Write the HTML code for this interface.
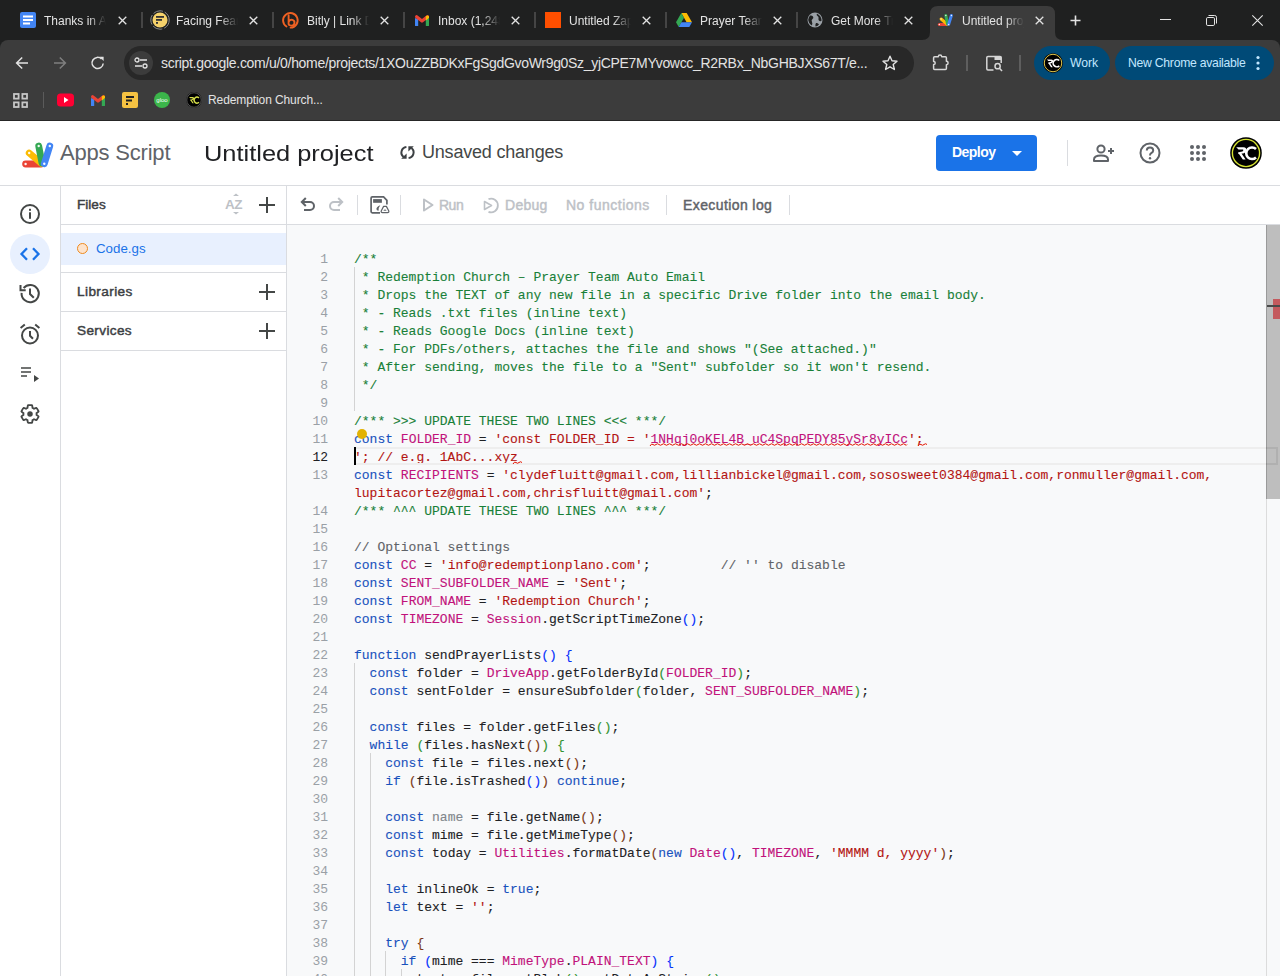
<!DOCTYPE html>
<html><head><meta charset="utf-8">
<style>
*{box-sizing:border-box;margin:0;padding:0}
html,body{width:1280px;height:976px;overflow:hidden;background:#fff;font-family:"Liberation Sans",sans-serif}
.a{position:absolute}
svg{position:absolute;overflow:visible}
#frame{position:absolute;left:0;top:0;width:1280px;height:48px;background:#1f2020}
#toolbar{position:absolute;left:0;top:40px;width:1280px;height:80px;background:#3c3c3c;border-radius:8px 8px 0 0}
#tbline{position:absolute;left:0;top:120px;width:1280px;height:1px;background:#262626}
.ttl{position:absolute;top:14px;white-space:nowrap;overflow:hidden;height:17px;color:#e3e3e3;font-size:12px;line-height:15px;
 -webkit-mask-image:linear-gradient(to right,#000 calc(100% - 18px),transparent 100%)}
.sep{position:absolute;top:12px;width:2px;height:16px;background:#454545}
.bsep{position:absolute;width:1px;background:#6b6b6b}
/* app */
.hdr-line{position:absolute;left:0;top:185px;width:1280px;height:1px;background:#dadce0}
.rail-line{position:absolute;left:60px;top:186px;width:1px;height:790px;background:#dadce0}
.files-line{position:absolute;left:286px;top:186px;width:1px;height:790px;background:#dadce0}
.med{font-weight:normal;-webkit-text-stroke:0.45px currentColor}
.hl{position:absolute;height:1px;background:#dadce0}
.gs{font-family:"Liberation Sans",sans-serif}
#code{position:absolute;left:287px;top:225px;width:979px;height:751px;background:#f8f9fa;overflow:hidden}
.ln{position:absolute;left:290px;padding-top:2px;width:38px;text-align:right;font:13px/18px "Liberation Mono",monospace;color:#9aa0a6}
.ln.cur{color:#202124}
.cl{position:absolute;left:354px;padding-top:2px;-webkit-text-stroke:0.1px currentColor;white-space:pre;font:13px/18px "Liberation Mono",monospace;color:#202124}
.k{color:#1851bd}.c{color:#c1127a}.s{color:#b31412}.g{color:#188038}.m{color:#5f6368}.t{color:#202124}
.b1{color:#0431fa}.b2{color:#319331}.b3{color:#7b3814}.n{color:#80868b}
.ig{position:absolute;width:1px;background:#d3d3d3}
</style></head><body>
<!-- ========== CHROME FRAME ========== -->
<div id="frame"></div>
<div id="toolbar"></div>
<div id="tbline"></div>
<!-- active tab -->
<svg width="1280" height="41" style="left:0;top:0">
 <path d="M922 40 Q930 40 930 32 L930 14 Q930 6 938 6 L1047 6 Q1055 6 1055 14 L1055 32 Q1055 40 1063 40 Z" fill="#3c3c3c"/>
</svg>
<!-- tab 1 docs -->
<svg width="16" height="16" style="left:20px;top:12px" viewBox="0 0 16 16"><rect x="0" y="0" width="16" height="16" rx="2" fill="#4285f4"/><rect x="3" y="3.5" width="10" height="2" fill="#fff"/><rect x="3" y="7" width="10" height="2" fill="#fff"/><rect x="3" y="10.5" width="7" height="2" fill="#fff"/></svg>
<div class="ttl" style="left:44px;width:62px">Thanks in Advance</div>
<svg width="9" height="9" style="left:118px;top:16px" viewBox="0 0 9 9"><path d="M0.7 0.7L8.3 8.3M8.3 0.7L0.7 8.3" stroke="#e3e3e3" stroke-width="1.3"/></svg>
<div class="sep" style="left:141px"></div>
<!-- tab 2 facing fear -->
<svg width="20" height="20" style="left:150px;top:10px" viewBox="0 0 20 20"><circle cx="10" cy="10" r="9.2" fill="none" stroke="#8a8a8a" stroke-width="1" stroke-dasharray="10 2"/><circle cx="10" cy="10" r="7.5" fill="#f6d26b"/><rect x="6" y="6" width="8" height="1.8" fill="#333"/><rect x="6" y="9" width="6" height="1.8" fill="#333"/><rect x="6" y="12" width="2" height="1.8" fill="#333"/></svg>
<div class="ttl" style="left:176px;width:62px">Facing Fear</div>
<svg width="9" height="9" style="left:249px;top:16px" viewBox="0 0 9 9"><path d="M0.7 0.7L8.3 8.3M8.3 0.7L0.7 8.3" stroke="#e3e3e3" stroke-width="1.3"/></svg>
<div class="sep" style="left:272px"></div>
<!-- tab 3 bitly -->
<svg width="18" height="18" style="left:282px;top:11px" viewBox="0 0 18 18"><path d="M4.5 15.5 A7.3 7.3 0 1 1 8.6 16.6" fill="none" stroke="#ee6123" stroke-width="1.9" stroke-linecap="round"/><path d="M6.6 4.2 V12.8 Q6.6 14.6 9.6 14.6 A2.9 2.9 0 1 0 7 10.4" fill="none" stroke="#ee6123" stroke-width="1.9" stroke-linecap="round"/></svg>
<div class="ttl" style="left:307px;width:62px">Bitly | Link Dashboard</div>
<svg width="9" height="9" style="left:380px;top:16px" viewBox="0 0 9 9"><path d="M0.7 0.7L8.3 8.3M8.3 0.7L0.7 8.3" stroke="#e3e3e3" stroke-width="1.3"/></svg>
<div class="sep" style="left:403px"></div>
<!-- tab 4 gmail -->
<svg width="14" height="11" style="left:415px;top:14.5px" viewBox="0 0 14 11"><path d="M0 3 V10.5 Q0 11 0.5 11 H3.2 V4.2 Z" fill="#4285f4"/><path d="M14 3 V10.5 Q14 11 13.5 11 H10.8 V4.2 Z" fill="#34a853"/><path d="M1.6 1.8 L7 6 L12.4 1.8" fill="none" stroke="#ea4335" stroke-width="3.2" stroke-linecap="round" stroke-linejoin="round"/><path d="M10.8 1.2 Q12.4 -0.2 13.6 0.8 Q14.2 1.4 14 3 L10.8 5.4 Z" fill="#fbbc04"/></svg>
<div class="ttl" style="left:438px;width:62px">Inbox (1,248) - clyde</div>
<svg width="9" height="9" style="left:511px;top:16px" viewBox="0 0 9 9"><path d="M0.7 0.7L8.3 8.3M8.3 0.7L0.7 8.3" stroke="#e3e3e3" stroke-width="1.3"/></svg>
<div class="sep" style="left:534px"></div>
<!-- tab 5 zapier -->
<div class="a" style="left:545px;top:12px;width:16px;height:16px;background:#ff4f00"></div>
<div class="ttl" style="left:569px;width:62px">Untitled Zap</div>
<svg width="9" height="9" style="left:642px;top:16px" viewBox="0 0 9 9"><path d="M0.7 0.7L8.3 8.3M8.3 0.7L0.7 8.3" stroke="#e3e3e3" stroke-width="1.3"/></svg>
<div class="sep" style="left:665px"></div>
<!-- tab 6 drive -->
<svg width="16" height="14" style="left:676px;top:13px" viewBox="0 0 16 14"><path d="M5.3 0 H10.7 L16 9.3 H10.6 Z" fill="#fbbc04"/><path d="M5.3 0 L0 9.3 L2.7 14 L8 4.7 Z" fill="#34a853"/><path d="M2.7 14 H13.3 L16 9.3 H5.4 Z" fill="#4285f4"/></svg>
<div class="ttl" style="left:700px;width:62px">Prayer Team</div>
<svg width="9" height="9" style="left:773px;top:16px" viewBox="0 0 9 9"><path d="M0.7 0.7L8.3 8.3M8.3 0.7L0.7 8.3" stroke="#e3e3e3" stroke-width="1.3"/></svg>
<div class="sep" style="left:796px"></div>
<!-- tab 7 globe -->
<svg width="16" height="16" style="left:807px;top:12px" viewBox="0 0 16 16"><circle cx="8" cy="8" r="7.5" fill="#9aa0a6"/><path d="M3 3.5 Q5 3 6 4.5 Q7 6 5.5 7 Q4 8 5 10 Q6 12 4.5 13.5 Q1.5 11 1.2 8 Q1.5 5 3 3.5Z M10 1.5 Q9 3 10.5 4 Q12 4.5 11.5 6.5 Q11 8 12.5 9 Q14 9.5 14.6 8.5 Q14.5 4 10 1.5Z M9 11 Q11 10.5 12 12.5 Q10.5 14.3 8.5 14.5 Q8 12.5 9 11Z" fill="#1f2020"/></svg>
<div class="ttl" style="left:831px;width:62px">Get More Traffic</div>
<svg width="9" height="9" style="left:904px;top:16px" viewBox="0 0 9 9"><path d="M0.7 0.7L8.3 8.3M8.3 0.7L0.7 8.3" stroke="#e3e3e3" stroke-width="1.3"/></svg>
<!-- tab 8 active apps script -->
<svg width="17" height="14" style="left:937px;top:13px" viewBox="0 0 34 28"><g stroke-linecap="round" stroke-width="6"><path d="M4.6 23 H20" stroke="#ea4335"/><path d="M8.2 12 L20.5 22.5" stroke="#fbbc04"/><path d="M17.7 5 L21 22" stroke="#34a853"/><path d="M28.8 5 L23.3 22.8" stroke="#4285f4"/></g><g fill="#fff" opacity="0.95"><circle cx="4.6" cy="23" r="1.3"/><circle cx="17.7" cy="5" r="1.3"/><circle cx="28.8" cy="5" r="1.3"/><circle cx="23.3" cy="22.8" r="1.3"/><circle cx="8.2" cy="12" r="1.3"/></g></svg>
<div class="ttl" style="left:962px;width:62px">Untitled project</div>
<svg width="9" height="9" style="left:1035px;top:16px" viewBox="0 0 9 9"><path d="M0.7 0.7L8.3 8.3M8.3 0.7L0.7 8.3" stroke="#e3e3e3" stroke-width="1.3"/></svg>
<!-- new tab -->
<svg width="11" height="11" style="left:1070px;top:14.5px" viewBox="0 0 11 11"><path d="M5.5 0.5V10.5M0.5 5.5H10.5" stroke="#e3e3e3" stroke-width="1.6"/></svg>
<!-- window controls -->
<div class="a" style="left:1160px;top:19px;width:11px;height:1px;background:#e3e3e3"></div>
<svg width="11" height="11" style="left:1205.5px;top:14.5px" viewBox="0 0 11 11"><rect x="0.5" y="2.5" width="8" height="8" rx="1.3" fill="none" stroke="#e3e3e3" stroke-width="1"/><path d="M2.5 0.5 H8.7 Q10.5 0.5 10.5 2.3 V8.5" fill="none" stroke="#e3e3e3" stroke-width="1"/></svg>
<svg width="11" height="11" style="left:1251.5px;top:14.5px" viewBox="0 0 11 11"><path d="M0.3 0.3L10.7 10.7M10.7 0.3L0.3 10.7" stroke="#e3e3e3" stroke-width="1.1"/></svg>

<!-- ===== toolbar ===== -->
<svg width="14" height="14" style="left:15px;top:56px" viewBox="0 0 14 14"><path d="M13 7H1.8M7.2 1.5L1.6 7L7.2 12.5" fill="none" stroke="#e3e3e3" stroke-width="1.5"/></svg>
<svg width="14" height="14" style="left:53px;top:56px" viewBox="0 0 14 14"><path d="M1 7H12.2M6.8 1.5L12.4 7L6.8 12.5" fill="none" stroke="#7f7f7f" stroke-width="1.5"/></svg>
<svg width="14" height="14" style="left:91px;top:56px" viewBox="0 0 14 14"><path d="M12.2 7.5 A5.6 5.6 0 1 1 10.6 3" fill="none" stroke="#e3e3e3" stroke-width="1.5"/><path d="M8.5 0.8 H12.6 V4.9 Z" fill="#e3e3e3"/></svg>
<div class="a" style="left:124px;top:46px;width:790px;height:34px;border-radius:17px;background:#282828"></div>
<div class="a" style="left:129px;top:51px;width:24px;height:24px;border-radius:12px;background:#3c3c3c"></div>
<svg width="14" height="12" style="left:134px;top:57px" viewBox="0 0 14 12"><circle cx="3" cy="3" r="2" fill="none" stroke="#e3e3e3" stroke-width="1.3"/><path d="M6 3H13M1 9H8" stroke="#e3e3e3" stroke-width="1.3"/><circle cx="11" cy="9" r="2" fill="none" stroke="#e3e3e3" stroke-width="1.3"/></svg>
<div class="a" style="left:161px;top:55px;font-size:14px;line-height:16px;color:#e3e3e3;white-space:nowrap;letter-spacing:-0.31px">script.google.com/u/0/home/projects/1XOuZZBDKxFgSgdGvoWr9g0Sz_yjCPE7MYvowcc_R2RBx_NbGHBJXS67T/e...</div>
<svg width="16" height="16" style="left:882px;top:55px" viewBox="0 0 16 16"><path d="M8 1.2 L10 5.8 L15 6.2 L11.2 9.5 L12.4 14.5 L8 11.8 L3.6 14.5 L4.8 9.5 L1 6.2 L6 5.8 Z" fill="none" stroke="#e3e3e3" stroke-width="1.4" stroke-linejoin="round"/></svg>
<svg width="18" height="18" style="left:931px;top:53px" viewBox="0 0 18 18"><path d="M3.6 3.8 H7.3 A1.7 1.7 0 0 1 10.7 3.8 H14.4 Q15.4 3.8 15.4 4.8 V8.3 A1.7 1.7 0 0 1 15.4 11.7 V15.6 Q15.4 16.6 14.4 16.6 H3.6 Q2.6 16.6 2.6 15.6 V11.6 A1.6 1.6 0 0 0 2.6 8.4 V4.8 Q2.6 3.8 3.6 3.8 Z" fill="none" stroke="#d7d7d7" stroke-width="1.5" stroke-linejoin="round"/></svg>
<div class="bsep" style="left:966px;top:55px;width:2px;height:16px;background:#5e5e5e"></div>
<svg width="18" height="18" style="left:985px;top:54px" viewBox="0 0 18 18"><path d="M8.5 16 H3 Q1.8 16 1.8 14.8 V3.6 Q1.8 2.4 3 2.4 H15 Q16.2 2.4 16.2 3.6 V9" fill="none" stroke="#d7d7d7" stroke-width="1.5"/><rect x="9.5" y="2.4" width="6.7" height="3.6" fill="#d7d7d7"/><circle cx="12.6" cy="12.2" r="2.6" fill="none" stroke="#d7d7d7" stroke-width="1.5"/><path d="M14.5 14.2 L17 17" stroke="#d7d7d7" stroke-width="1.5"/></svg>
<div class="bsep" style="left:1019px;top:55px;width:2px;height:16px;background:#5e5e5e"></div>
<div class="a" style="left:1034px;top:46px;width:76px;height:34px;border-radius:17px;background:#004a77"></div>
<svg width="20" height="20" style="left:1043px;top:53px" viewBox="0 0 32 32"><circle cx="16" cy="16" r="15.8" fill="#000"/><circle cx="16" cy="16" r="14" fill="none" stroke="#e0c64a" stroke-width="1.6"/><path d="M6.2 10.2 H13.5 Q17 10.5 16 14 Q15 16.6 11.5 16.6 L15.6 22.6 H12.8 L9.2 17.2 Q8 17.2 8 15.5 Q9.5 14.6 12.4 14.4 Q13.6 14 13.2 12.6 H8.5 Z" fill="#fff"/><path d="M26 12 A5.8 5.8 0 1 0 26 20.5" fill="none" stroke="#fff" stroke-width="2.6"/></svg>

<div class="a" style="left:1070px;top:56px;font-size:12.2px;line-height:14px;color:#c2e7ff">Work</div>
<div class="a" style="left:1115px;top:46px;width:159px;height:34px;border-radius:17px;background:#004a77"></div>
<div class="a" style="left:1128px;top:56px;font-size:12.2px;line-height:14px;color:#c2e7ff;white-space:nowrap;letter-spacing:-0.25px">New Chrome available</div>
<svg width="4" height="16" style="left:1256px;top:55px" viewBox="0 0 4 16"><circle cx="2" cy="2.5" r="1.6" fill="#c2e7ff"/><circle cx="2" cy="8" r="1.6" fill="#c2e7ff"/><circle cx="2" cy="13.5" r="1.6" fill="#c2e7ff"/></svg>

<!-- ===== bookmarks ===== -->
<svg width="15" height="15" style="left:13px;top:93px" viewBox="0 0 15 15"><g fill="none" stroke="#c7c7c7" stroke-width="1.8"><rect x="1" y="1" width="4.6" height="4.6"/><rect x="9.4" y="1" width="4.6" height="4.6"/><rect x="1" y="9.4" width="4.6" height="4.6"/><rect x="9.4" y="9.4" width="4.6" height="4.6"/></g></svg>
<div class="bsep" style="left:43px;top:92px;height:16px;background:#5b5b5b"></div>
<svg width="18" height="14" style="left:57px;top:93px" viewBox="0 0 18 14"><rect x="0" y="0.5" width="17" height="13" rx="3.5" fill="#ff0033"/><path d="M7 4 L11.5 7 L7 10 Z" fill="#fff"/></svg>
<svg width="14" height="11" style="left:91px;top:94.5px" viewBox="0 0 14 11"><path d="M0 3 V10.5 Q0 11 0.5 11 H3.2 V4.2 Z" fill="#4285f4"/><path d="M14 3 V10.5 Q14 11 13.5 11 H10.8 V4.2 Z" fill="#34a853"/><path d="M1.6 1.8 L7 6 L12.4 1.8" fill="none" stroke="#ea4335" stroke-width="3.2" stroke-linecap="round" stroke-linejoin="round"/><path d="M10.8 1.2 Q12.4 -0.2 13.6 0.8 Q14.2 1.4 14 3 L10.8 5.4 Z" fill="#fbbc04"/></svg>
<svg width="16" height="16" style="left:122px;top:92px" viewBox="0 0 16 16"><rect width="16" height="16" rx="2" fill="#f5c242"/><rect x="4" y="4" width="8" height="2" fill="#222"/><rect x="4" y="7.5" width="6" height="2" fill="#222"/><rect x="4" y="11" width="2" height="2" fill="#222"/></svg>
<svg width="16" height="16" style="left:154px;top:92px" viewBox="0 0 16 16"><circle cx="8" cy="8" r="8" fill="#3bb54a"/><text x="8" y="10" text-anchor="middle" font-family="Liberation Sans" font-size="6" fill="#fff">gloo</text></svg>
<svg width="16" height="16" style="left:186px;top:92px" viewBox="0 0 32 32"><circle cx="16" cy="16" r="15.8" fill="#000"/><circle cx="16" cy="16" r="14.5" fill="none" stroke="#666" stroke-width="1.6"/><path d="M6.2 10.2 H13.5 Q17 10.5 16 14 Q15 16.6 11.5 16.6 L15.6 22.6 H12.8 L9.2 17.2 Q8 17.2 8 15.5 Q9.5 14.6 12.4 14.4 Q13.6 14 13.2 12.6 H8.5 Z" fill="#d7e04a"/><path d="M26 12 A5.8 5.8 0 1 0 26 20.5" fill="none" stroke="#d7e04a" stroke-width="2.8"/></svg>

<div class="a" style="left:208px;top:93px;font-size:12px;line-height:14px;color:#e3e3e3;white-space:nowrap;letter-spacing:-0.1px">Redemption Church...</div>

<!-- ========== APP ========== -->
<div class="hdr-line"></div>
<div class="rail-line"></div>
<div class="files-line"></div>
<!-- header -->
<svg width="34" height="28" style="left:21px;top:141px" viewBox="0 0 34 28"><g stroke-linecap="round" stroke-width="6.8"><path d="M4.6 23 H20" stroke="#ea4335"/><path d="M8.2 12 L20.5 22.5" stroke="#fbbc04"/><path d="M17.7 5 L21 22" stroke="#34a853"/><path d="M28.8 5 L23.3 22.8" stroke="#4285f4"/></g><g fill="#fff" opacity="0.95"><circle cx="4.6" cy="23" r="1.2"/><circle cx="8.2" cy="12" r="1.2"/><circle cx="17.7" cy="5" r="1.2"/><circle cx="28.8" cy="5" r="1.2"/><circle cx="23.3" cy="22.8" r="1.2"/></g></svg>
<div class="a" style="left:60px;top:140px;font-size:22px;line-height:26px;color:#5f6368;white-space:nowrap;letter-spacing:-0.2px">Apps Script</div>
<div class="a" style="left:204px;top:141px;font-size:22px;line-height:26px;color:#202124;white-space:nowrap;transform:scaleX(1.155);transform-origin:0 0">Untitled project</div>
<svg width="15" height="15" style="left:400px;top:145px" viewBox="0 0 15 15"><path d="M6.4 2 A5.6 5.6 0 0 0 3.6 12" fill="none" stroke="#3c4043" stroke-width="2"/><path d="M8.6 13 A5.6 5.6 0 0 0 11.4 3" fill="none" stroke="#3c4043" stroke-width="2"/><path d="M1.2 13.8 H6.6 V8.4 Z" fill="#3c4043"/><path d="M13.8 1.2 H8.4 V6.6 Z" fill="#3c4043"/></svg>
<div class="a" style="left:422px;top:141px;font-size:18px;line-height:22px;color:#444746;white-space:nowrap;letter-spacing:-0.2px">Unsaved changes</div>
<div class="a" style="left:936px;top:135px;width:101px;height:36px;border-radius:4px;background:#1a73e8"></div>
<div class="a" style="left:952px;top:144px;font-weight:bold;font-size:14px;line-height:16px;color:#fff;letter-spacing:-0.55px">Deploy</div>
<svg width="10" height="5" style="left:1012px;top:151px" viewBox="0 0 10 5"><path d="M0 0H10L5 5Z" fill="#fff"/></svg>
<div class="a" style="left:1067px;top:140px;width:1px;height:26px;background:#dadce0"></div>
<svg width="24" height="24" style="left:1092px;top:141px" viewBox="0 0 24 24"><circle cx="9" cy="8" r="3.6" fill="none" stroke="#5f6368" stroke-width="2"/><path d="M2 20 V18.5 Q2 14.5 9 14.5 Q16 14.5 16 18.5 V20 Z" fill="none" stroke="#5f6368" stroke-width="2" stroke-linejoin="round"/><path d="M19 7 V13 M16 10 H22" stroke="#5f6368" stroke-width="2"/></svg>
<svg width="22" height="22" style="left:1139px;top:142px" viewBox="0 0 22 22"><circle cx="11" cy="11" r="9.5" fill="none" stroke="#5f6368" stroke-width="2"/><path d="M7.8 8.6 Q7.8 5.6 11 5.6 Q14.2 5.6 14.2 8.4 Q14.2 10 12.3 11 Q11 11.8 11 13.4" fill="none" stroke="#5f6368" stroke-width="2"/><circle cx="11" cy="16.3" r="1.2" fill="#5f6368"/></svg>
<svg width="18" height="18" style="left:1189px;top:144px" viewBox="0 0 18 18"><g fill="#5f6368"><circle cx="3" cy="3" r="2"/><circle cx="9" cy="3" r="2"/><circle cx="15" cy="3" r="2"/><circle cx="3" cy="9" r="2"/><circle cx="9" cy="9" r="2"/><circle cx="15" cy="9" r="2"/><circle cx="3" cy="15" r="2"/><circle cx="9" cy="15" r="2"/><circle cx="15" cy="15" r="2"/></g></svg>
<svg width="32" height="32" style="left:1230px;top:136.5px" viewBox="0 0 32 32"><circle cx="16" cy="16" r="15.8" fill="#000"/><circle cx="16" cy="16" r="13.6" fill="none" stroke="#d6e332" stroke-width="1.4"/><path d="M6.2 10.2 H13.5 Q17 10.5 16 14 Q15 16.6 11.5 16.6 L15.6 22.6 H12.8 L9.2 17.2 Q8 17.2 8 15.5 Q9.5 14.6 12.4 14.4 Q13.6 14 13.2 12.6 H8.5 Z" fill="#fff"/><path d="M26 12 A5.8 5.8 0 1 0 26 20.5" fill="none" stroke="#fff" stroke-width="2.6"/></svg>


<!-- left rail -->
<svg width="22" height="22" style="left:19px;top:203px" viewBox="0 0 22 22"><circle cx="11" cy="11" r="9" fill="none" stroke="#444746" stroke-width="2"/><rect x="10" y="5.8" width="2" height="2" fill="#444746"/><rect x="10" y="9.3" width="2" height="6.5" fill="#444746"/></svg>
<div class="a" style="left:10px;top:234px;width:40px;height:40px;border-radius:20px;background:#e8f0fe"></div>
<svg width="22" height="14" style="left:19px;top:247px" viewBox="0 0 22 14"><path d="M8 1.2 L2.5 7 L8 12.8 M14 1.2 L19.5 7 L14 12.8" fill="none" stroke="#1a73e8" stroke-width="2.3"/></svg>
<svg width="22" height="22" style="left:19px;top:283px" viewBox="0 0 22 22"><path d="M2.6 9.8 A8.6 8.6 0 1 0 4.6 5" fill="none" stroke="#444746" stroke-width="2"/><path d="M1.5 2 V7.2 H6.7" fill="none" stroke="#444746" stroke-width="2"/><path d="M11 5.5 V11 L14.8 14.8" fill="none" stroke="#444746" stroke-width="2"/></svg>
<svg width="22" height="22" style="left:19px;top:323px" viewBox="0 0 22 22"><circle cx="11" cy="12.5" r="8" fill="none" stroke="#444746" stroke-width="2"/><path d="M11 8 V12.8 L14 15.8" fill="none" stroke="#444746" stroke-width="2"/><path d="M1.6 5 L5.8 1.5 M20.4 5 L16.2 1.5" stroke="#444746" stroke-width="2"/></svg>
<svg width="22" height="22" style="left:20px;top:366px" viewBox="0 0 22 22"><path d="M1 2 H11 M1 6 H11 M1 10 H7" stroke="#444746" stroke-width="1.7"/><path d="M14 9 L19 12.5 L14 16 Z" fill="#444746"/></svg>
<svg width="22" height="22" style="left:19px;top:403px" viewBox="0 0 24 24"><path d="M19.14 12.94c.04-.3.06-.61.06-.94 0-.32-.02-.64-.07-.94l2.03-1.58c.18-.14.23-.41.12-.61l-1.92-3.32c-.12-.22-.37-.29-.59-.22l-2.39.96c-.5-.38-1.03-.7-1.62-.94l-.36-2.54c-.04-.24-.24-.41-.48-.41h-3.84c-.24 0-.43.17-.47.41l-.36 2.54c-.59.24-1.13.57-1.62.94l-2.39-.96c-.22-.08-.47 0-.59.22L2.74 8.87c-.12.21-.08.47.12.61l2.03 1.58c-.05.3-.09.63-.09.94s.02.64.07.94l-2.03 1.58c-.18.14-.23.41-.12.61l1.92 3.32c.12.22.37.29.59.22l2.39-.96c.5.38 1.03.7 1.62.94l.36 2.54c.05.24.24.41.48.41h3.84c.24 0 .44-.17.47-.41l.36-2.54c.59-.24 1.13-.56 1.62-.94l2.39.96c.22.08.47 0 .59-.22l1.92-3.32c.12-.22.07-.47-.12-.61l-2.01-1.58z" fill="none" stroke="#444746" stroke-width="2"/><circle cx="12" cy="12" r="3" fill="#444746"/></svg>

<!-- files panel -->
<div class="a med" style="left:77px;top:197px;font-size:13.6px;line-height:15px;color:#3c4043">Files</div>
<div class="a" style="left:225px;top:198px;font-weight:bold;font-size:13.5px;line-height:14px;color:#bdc1c6;letter-spacing:-0.5px">AZ</div>
<svg width="8" height="22" style="left:232px;top:193px" viewBox="0 0 8 22"><path d="M1 3 L4 0.5 L7 3 Z M1 19 L4 21.5 L7 19 Z" fill="#bdc1c6"/></svg>
<svg width="18" height="18" style="left:258px;top:196px" viewBox="0 0 18 18"><path d="M9 1 V17 M1 9 H17" stroke="#444746" stroke-width="2"/></svg>
<div class="hl" style="left:61px;top:224px;width:225px"></div>
<div class="a" style="left:61px;top:233px;width:225px;height:32px;background:#e8f0fe"></div>
<div class="a" style="left:77px;top:243px;width:11px;height:11px;border-radius:6px;background:#fde3cc;border:1.3px solid #ee8a1e"></div>
<div class="a" style="left:96px;top:241px;font-size:13.3px;line-height:15px;color:#1a73e8">Code.gs</div>
<div class="hl" style="left:61px;top:272px;width:225px"></div>
<div class="a med" style="left:77px;top:284px;font-size:13.6px;line-height:15px;color:#3c4043;letter-spacing:0.4px">Libraries</div>
<svg width="18" height="18" style="left:258px;top:283px" viewBox="0 0 18 18"><path d="M9 1 V17 M1 9 H17" stroke="#444746" stroke-width="2"/></svg>
<div class="hl" style="left:61px;top:311px;width:225px"></div>
<div class="a med" style="left:77px;top:323px;font-size:13.6px;line-height:15px;color:#3c4043;letter-spacing:0.36px">Services</div>
<svg width="18" height="18" style="left:258px;top:322px" viewBox="0 0 18 18"><path d="M9 1 V17 M1 9 H17" stroke="#444746" stroke-width="2"/></svg>
<div class="hl" style="left:61px;top:350px;width:225px"></div>

<!-- editor toolbar -->
<svg width="16" height="14" style="left:300px;top:197px" viewBox="0 0 16 14"><path d="M2.5 5 H10 A4 4 0 0 1 10 13 H4" fill="none" stroke="#5f6368" stroke-width="2"/><path d="M5.8 1 L1.8 5 L5.8 9" fill="none" stroke="#5f6368" stroke-width="2"/></svg>
<svg width="16" height="14" style="left:328px;top:197px" viewBox="0 0 16 14"><path d="M13.5 5 H6 A4 4 0 0 0 6 13 H12" fill="none" stroke="#bdc1c6" stroke-width="2"/><path d="M10.2 1 L14.2 5 L10.2 9" fill="none" stroke="#bdc1c6" stroke-width="2"/></svg>
<div class="a" style="left:357px;top:195px;width:1px;height:20px;background:#dadce0"></div>
<svg width="40" height="30" style="left:360px;top:190px" viewBox="0 0 40 30"><path d="M20 22.8 H12.3 Q11.1 22.8 11.1 21.6 V8.1 Q11.1 6.95 12.3 6.95 H23.6 L26.9 10.3 V14.4" fill="none" stroke="#5f6368" stroke-width="1.7"/><rect x="13.1" y="9.1" width="8.8" height="3.7" fill="#5f6368"/><path d="M20.3 15.2 Q16.4 16.6 16.4 19 Q16.4 20.8 18.6 20.8 Q18.1 17.8 20.3 15.2 Z" fill="#5f6368"/><path d="M23.6 16.4 H26.4 L28.8 21 Q29.2 22.6 27.6 22.6 H22.4 Q20.8 22.6 21.2 21 Z" fill="none" stroke="#5f6368" stroke-width="1.2" stroke-linejoin="round"/><path d="M24.2 19.6 H25.8 L26.6 21 H23.4 Z" fill="#8a8e92"/></svg>
<div class="a" style="left:400px;top:195px;width:1px;height:20px;background:#dadce0"></div>
<svg width="12" height="14" style="left:422px;top:198px" viewBox="0 0 12 14"><path d="M2 1.5 L10.5 7 L2 12.5 Z" fill="none" stroke="#bdc1c6" stroke-width="2" stroke-linejoin="round"/></svg>
<div class="a med" style="left:439px;top:198px;font-size:14px;line-height:15px;color:#bdc1c6;letter-spacing:-0.5px">Run</div>
<svg width="17" height="17" style="left:483px;top:197px" viewBox="0 0 17 17"><path d="M5.5 2.2 A6.8 6.8 0 1 1 5.5 14.8" fill="none" stroke="#bdc1c6" stroke-width="1.8"/><path d="M1.5 4.5 L8.5 8.5 L1.5 12.5 Z" fill="none" stroke="#bdc1c6" stroke-width="1.6" stroke-linejoin="round"/></svg>
<div class="a med" style="left:505px;top:198px;font-size:14px;line-height:15px;color:#bdc1c6;letter-spacing:0.27px">Debug</div>
<div class="a med" style="left:566px;top:198px;font-size:14px;line-height:15px;color:#bdc1c6;letter-spacing:0.5px">No functions</div>
<div class="a" style="left:666px;top:195px;width:1px;height:20px;background:#dadce0"></div>
<div class="a med" style="left:683px;top:198px;font-size:14px;line-height:15px;color:#5f6368;letter-spacing:0.4px">Execution log</div>
<div class="a" style="left:789px;top:195px;width:1px;height:20px;background:#dadce0"></div>
<div class="hl" style="left:287px;top:224px;width:993px"></div>

<div id="code"></div>
<div class="ig" style="left:354.0px;top:267px;height:144px"></div>
<div class="ig" style="left:354.0px;top:663px;height:342px"></div>
<div class="ig" style="left:369.6px;top:753px;height:252px"></div>
<div class="ig" style="left:385.2px;top:951px;height:54px"></div>
<div class="ig" style="left:400.8px;top:969px;height:36px"></div>
<div class="ln" style="top:249px">1</div>
<div class="cl" style="top:249px"><span class="g">/**</span></div>
<div class="ln" style="top:267px">2</div>
<div class="cl" style="top:267px"><span class="g"> * Redemption Church – Prayer Team Auto Email</span></div>
<div class="ln" style="top:285px">3</div>
<div class="cl" style="top:285px"><span class="g"> * Drops the TEXT of any new file in a specific Drive folder into the email body.</span></div>
<div class="ln" style="top:303px">4</div>
<div class="cl" style="top:303px"><span class="g"> * - Reads .txt files (inline text)</span></div>
<div class="ln" style="top:321px">5</div>
<div class="cl" style="top:321px"><span class="g"> * - Reads Google Docs (inline text)</span></div>
<div class="ln" style="top:339px">6</div>
<div class="cl" style="top:339px"><span class="g"> * - For PDFs/others, attaches the file and shows &quot;(See attached.)&quot;</span></div>
<div class="ln" style="top:357px">7</div>
<div class="cl" style="top:357px"><span class="g"> * After sending, moves the file to a &quot;Sent&quot; subfolder so it won&#x27;t resend.</span></div>
<div class="ln" style="top:375px">8</div>
<div class="cl" style="top:375px"><span class="g"> */</span></div>
<div class="ln" style="top:393px">9</div>
<div class="ln" style="top:411px">10</div>
<div class="cl" style="top:411px"><span class="g">/*** &gt;&gt;&gt; UPDATE THESE TWO LINES &lt;&lt;&lt; ***/</span></div>
<div class="ln" style="top:429px">11</div>
<div class="cl" style="top:429px"><span class="k">const</span><span class="t"> </span><span class="c">FOLDER_ID</span><span class="t"> = </span><span class="s">&#x27;const FOLDER_ID = &#x27;</span><span class="c">1NHqj0oKEL4B_uC4SpqPEDY85ySr8yICc</span><span class="s">&#x27;;</span></div>
<div class="ln cur" style="top:447px">12</div>
<div class="cl" style="top:447px"><span class="s">&#x27;; // e.g. 1AbC...xyz</span></div>
<div class="ln" style="top:465px">13</div>
<div class="cl" style="top:465px"><span class="k">const</span><span class="t"> </span><span class="c">RECIPIENTS</span><span class="t"> = </span><span class="s">&#x27;clydefluitt@gmail.com,lillianbickel@gmail.com,sososweet0384@gmail.com,ronmuller@gmail.com,</span></div>
<div class="cl" style="top:483px"><span class="s">lupitacortez@gmail.com,chrisfluitt@gmail.com&#x27;</span><span class="t">;</span></div>
<div class="ln" style="top:501px">14</div>
<div class="cl" style="top:501px"><span class="g">/*** ^^^ UPDATE THESE TWO LINES ^^^ ***/</span></div>
<div class="ln" style="top:519px">15</div>
<div class="ln" style="top:537px">16</div>
<div class="cl" style="top:537px"><span class="m">// Optional settings</span></div>
<div class="ln" style="top:555px">17</div>
<div class="cl" style="top:555px"><span class="k">const</span><span class="t"> </span><span class="c">CC</span><span class="t"> = </span><span class="s">&#x27;info@redemptionplano.com&#x27;</span><span class="t">;         </span><span class="m">// &#x27;&#x27; to disable</span></div>
<div class="ln" style="top:573px">18</div>
<div class="cl" style="top:573px"><span class="k">const</span><span class="t"> </span><span class="c">SENT_SUBFOLDER_NAME</span><span class="t"> = </span><span class="s">&#x27;Sent&#x27;</span><span class="t">;</span></div>
<div class="ln" style="top:591px">19</div>
<div class="cl" style="top:591px"><span class="k">const</span><span class="t"> </span><span class="c">FROM_NAME</span><span class="t"> = </span><span class="s">&#x27;Redemption Church&#x27;</span><span class="t">;</span></div>
<div class="ln" style="top:609px">20</div>
<div class="cl" style="top:609px"><span class="k">const</span><span class="t"> </span><span class="c">TIMEZONE</span><span class="t"> = </span><span class="c">Session</span><span class="t">.getScriptTimeZone</span><span class="b1">()</span><span class="t">;</span></div>
<div class="ln" style="top:627px">21</div>
<div class="ln" style="top:645px">22</div>
<div class="cl" style="top:645px"><span class="k">function</span><span class="t"> sendPrayerLists</span><span class="b1">()</span><span class="t"> </span><span class="b1">{</span></div>
<div class="ln" style="top:663px">23</div>
<div class="cl" style="top:663px"><span class="t">  </span><span class="k">const</span><span class="t"> folder = </span><span class="c">DriveApp</span><span class="t">.getFolderById</span><span class="b2">(</span><span class="c">FOLDER_ID</span><span class="b2">)</span><span class="t">;</span></div>
<div class="ln" style="top:681px">24</div>
<div class="cl" style="top:681px"><span class="t">  </span><span class="k">const</span><span class="t"> sentFolder = ensureSubfolder</span><span class="b2">(</span><span class="t">folder, </span><span class="c">SENT_SUBFOLDER_NAME</span><span class="b2">)</span><span class="t">;</span></div>
<div class="ln" style="top:699px">25</div>
<div class="ln" style="top:717px">26</div>
<div class="cl" style="top:717px"><span class="t">  </span><span class="k">const</span><span class="t"> files = folder.getFiles</span><span class="b2">()</span><span class="t">;</span></div>
<div class="ln" style="top:735px">27</div>
<div class="cl" style="top:735px"><span class="t">  </span><span class="k">while</span><span class="t"> </span><span class="b2">(</span><span class="t">files.hasNext</span><span class="b3">()</span><span class="b2">)</span><span class="t"> </span><span class="b2">{</span></div>
<div class="ln" style="top:753px">28</div>
<div class="cl" style="top:753px"><span class="t">    </span><span class="k">const</span><span class="t"> file = files.next</span><span class="b3">()</span><span class="t">;</span></div>
<div class="ln" style="top:771px">29</div>
<div class="cl" style="top:771px"><span class="t">    </span><span class="k">if</span><span class="t"> </span><span class="b3">(</span><span class="t">file.isTrashed</span><span class="b1">()</span><span class="b3">)</span><span class="t"> </span><span class="k">continue</span><span class="t">;</span></div>
<div class="ln" style="top:789px">30</div>
<div class="ln" style="top:807px">31</div>
<div class="cl" style="top:807px"><span class="t">    </span><span class="k">const</span><span class="t"> </span><span class="n">name</span><span class="t"> = file.getName</span><span class="b3">()</span><span class="t">;</span></div>
<div class="ln" style="top:825px">32</div>
<div class="cl" style="top:825px"><span class="t">    </span><span class="k">const</span><span class="t"> mime = file.getMimeType</span><span class="b3">()</span><span class="t">;</span></div>
<div class="ln" style="top:843px">33</div>
<div class="cl" style="top:843px"><span class="t">    </span><span class="k">const</span><span class="t"> today = </span><span class="c">Utilities</span><span class="t">.formatDate</span><span class="b3">(</span><span class="k">new</span><span class="t"> </span><span class="c">Date</span><span class="b1">()</span><span class="t">, </span><span class="c">TIMEZONE</span><span class="t">, </span><span class="s">&#x27;MMMM d, yyyy&#x27;</span><span class="b3">)</span><span class="t">;</span></div>
<div class="ln" style="top:861px">34</div>
<div class="ln" style="top:879px">35</div>
<div class="cl" style="top:879px"><span class="t">    </span><span class="k">let</span><span class="t"> inlineOk = </span><span class="k">true</span><span class="t">;</span></div>
<div class="ln" style="top:897px">36</div>
<div class="cl" style="top:897px"><span class="t">    </span><span class="k">let</span><span class="t"> text = </span><span class="s">&#x27;&#x27;</span><span class="t">;</span></div>
<div class="ln" style="top:915px">37</div>
<div class="ln" style="top:933px">38</div>
<div class="cl" style="top:933px"><span class="t">    </span><span class="k">try</span><span class="t"> </span><span class="b3">{</span></div>
<div class="ln" style="top:951px">39</div>
<div class="cl" style="top:951px"><span class="t">      </span><span class="k">if</span><span class="t"> </span><span class="b1">(</span><span class="t">mime === </span><span class="c">MimeType</span><span class="t">.</span><span class="c">PLAIN_TEXT</span><span class="b1">)</span><span class="t"> </span><span class="b1">{</span></div>
<div class="ln" style="top:969px">40</div>
<div class="cl" style="top:969px"><span class="t">        text = file.getBlob</span><span class="b2">()</span><span class="t">.getDataAsString</span><span class="b2">()</span><span class="t">;</span></div>
<!-- current line -->
<div class="a" style="left:354px;top:447px;width:912px;height:18px;border:2px solid #eeeeee;border-right:none"></div>
<div class="a" style="left:354px;top:447px;width:2px;height:18px;background:#000"></div>
<div class="a" style="left:357px;top:429px;width:10px;height:10px;border-radius:5px;background:#e2b203"></div>
<!-- scrollbar -->
<div class="a" style="left:1266px;top:225px;width:14px;height:751px;background:#f8f9fa;border-left:1px solid #dcdcdc"></div>
<div class="a" style="left:1266px;top:225px;width:14px;height:274px;background:#bebebe;border-left:1px solid #9a9a9a"></div>
<div class="a" style="left:1273px;top:299px;width:7px;height:20px;background:#c45a5e"></div>
<div class="a" style="left:1267px;top:305px;width:13px;height:2px;background:#4a4a4a"></div>
<!-- squiggles -->
<svg width="280" height="4" style="left:650px;top:443px" viewBox="0 0 280 4"><path d="M0 3 Q1.5 0 3 1.5 T6 1.5 T9 1.5 T12 1.5 T15 1.5 T18 1.5 T21 1.5 T24 1.5 T27 1.5 T30 1.5 T33 1.5 T36 1.5 T39 1.5 T42 1.5 T45 1.5 T48 1.5 T51 1.5 T54 1.5 T57 1.5 T60 1.5 T63 1.5 T66 1.5 T69 1.5 T72 1.5 T75 1.5 T78 1.5 T81 1.5 T84 1.5 T87 1.5 T90 1.5 T93 1.5 T96 1.5 T99 1.5 T102 1.5 T105 1.5 T108 1.5 T111 1.5 T114 1.5 T117 1.5 T120 1.5 T123 1.5 T126 1.5 T129 1.5 T132 1.5 T135 1.5 T138 1.5 T141 1.5 T144 1.5 T147 1.5 T150 1.5 T153 1.5 T156 1.5 T159 1.5 T162 1.5 T165 1.5 T168 1.5 T171 1.5 T174 1.5 T177 1.5 T180 1.5 T183 1.5 T186 1.5 T189 1.5 T192 1.5 T195 1.5 T198 1.5 T201 1.5 T204 1.5 T207 1.5 T210 1.5 T213 1.5 T216 1.5 T219 1.5 T222 1.5 T225 1.5 T228 1.5 T231 1.5 T234 1.5 T237 1.5 T240 1.5 T243 1.5 T246 1.5 T249 1.5 T252 1.5 T255 1.5 T257 1.5" fill="none" stroke="#e51400" stroke-width="1"/><path d="M268 3 Q269.5 0 271 1.5 T274 1.5 T277 1.5" fill="none" stroke="#e51400" stroke-width="1"/></svg>
<svg width="12" height="4" style="left:513px;top:461px" viewBox="0 0 12 4"><path d="M0 3 Q1.5 0 3 1.5 T6 1.5 T9 1.5" fill="none" stroke="#e51400" stroke-width="1"/></svg>
<div class="a" style="left:1266px;top:447px;width:12px;height:18px;border:2px solid rgba(0,0,0,0.07);border-left:none"></div>

</body></html>
